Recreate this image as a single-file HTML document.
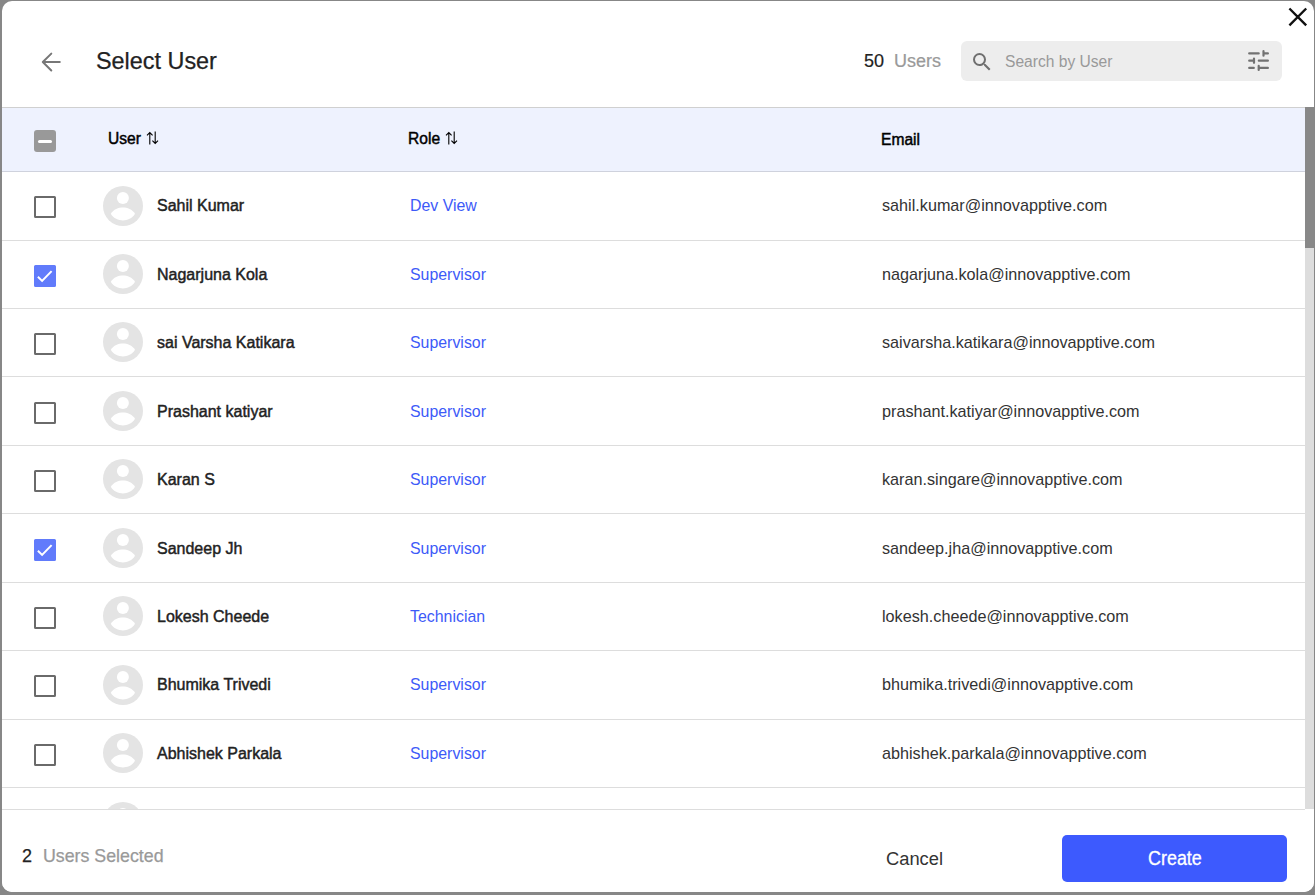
<!DOCTYPE html>
<html><head><meta charset="utf-8">
<style>
*{margin:0;padding:0;box-sizing:border-box}
html,body{width:1315px;height:895px;overflow:hidden;background:#878787;font-family:"Liberation Sans",sans-serif}
.modal{position:absolute;left:2px;top:1px;width:1312px;height:891px;background:#fff;border-radius:10px;overflow:hidden}
.abs{position:absolute}
.t{position:absolute;white-space:nowrap;line-height:1}
.hline{position:absolute;left:0;height:1px}
.row .cb{position:absolute;left:32px;width:22px;height:22px;border:2px solid #6a6a6a;border-radius:1.5px}
.cb.on{background:#617bfb;border-color:#617bfb}
.av{position:absolute;left:101px;width:40px;height:40px}
.name{position:absolute;left:155px;font-size:16px;color:#222;-webkit-text-stroke:0.45px #222;margin-top:1.3px}
.role{position:absolute;left:408px;font-size:15.9px;color:#3d5af8;margin-top:1px}
.email{position:absolute;left:880px;font-size:16.2px;color:#333;margin-top:0px}
</style></head>
<body>
<div class="modal">
  <!-- close -->
  <svg class="abs" style="left:1283px;top:3px" width="30" height="30" viewBox="1285 4 30 30"><path d="M1289.4 8.5L1306.2 25.3M1306.2 8.5L1289.4 25.3" stroke="#111" stroke-width="2.4" fill="none"/></svg>
  <!-- back arrow -->
  <svg class="abs" style="left:34px;top:44px" width="30" height="30" viewBox="36 45 30 30"><path d="M59.8 62.05H43.2M51.3 53.6L42.8 62.05L51.3 70.5" stroke="#777" stroke-width="2" stroke-linecap="round" stroke-linejoin="round" fill="none"/></svg>
  <div class="t" style="left:94px;top:49px;font-size:23.4px;color:#222;-webkit-text-stroke:0.25px #222">Select User</div>
  <div class="t" style="left:862px;top:51px;font-size:18px;color:#222;-webkit-text-stroke:0.2px #222">50</div>
  <div class="t" style="left:892px;top:51px;font-size:18px;color:#999;-webkit-text-stroke:0.2px #999">Users</div>
  <div class="abs" style="left:959px;top:40px;width:321px;height:40px;background:#ededed;border-radius:6px"></div>
  <svg class="abs" style="left:968px;top:49px" width="24" height="24" viewBox="0 0 24 24"><path fill="#6f6f6f" d="M15.5 14h-.79l-.28-.27A6.471 6.471 0 0 0 16 9.5 6.5 6.5 0 1 0 9.5 16c1.61 0 3.09-.59 4.23-1.57l.27.28v.79l5 4.99L20.49 19l-4.99-5zm-6 0C7.010 14 5 11.99 5 9.5S7.01 5 9.5 5 14 7.01 14 9.5 11.99 14 9.5 14z"/></svg>
  <div class="t" style="left:1003px;top:53px;font-size:15.6px;color:#999">Search by User</div>
  <svg class="abs" style="left:1240px;top:44px" width="32" height="32" viewBox="1242 45 32 32"><g stroke="#727272" stroke-width="2.2" stroke-linecap="round" fill="none"><path d="M1249.2 53.44H1258.7M1263.5 51.2V55.7M1263.5 53.44H1267.9M1249.2 60.69H1253M1254 58.5V62.8M1258.8 60.69H1267.9M1249.2 67.88H1253.8M1258.7 65.9V69.9M1258.7 67.88H1267.9"/></g></svg>

  <!-- table header -->
  <div class="hline" style="top:106px;width:1303px;background:#d0d0d0"></div>
  <div class="abs" style="left:0;top:107px;width:1303px;height:63px;background:#eef2fe"></div>
  <div class="hline" style="top:170px;width:1303px;background:#cfd2dd"></div>
  <div class="abs" style="left:32px;top:129px;width:22px;height:22px;background:#999;border-radius:3px"><div class="abs" style="left:4px;top:10px;width:14px;height:3px;background:#fff;border-radius:2px"></div></div>
  <div class="t" style="left:106px;top:130px;font-size:15.6px;color:#000;-webkit-text-stroke:0.45px #000">User</div><svg class="abs" style="left:144px;top:130px" width="13" height="14" viewBox="0 0 13 14"><path d="M3.8 1.5V13.5M1 4.3L3.8 1.5L6.6 4.3M9.2 0.5V12.5M6.4 9.7L9.2 12.5L12 9.7" stroke="#000" stroke-width="1.1" fill="none"/></svg>
  <div class="t" style="left:406px;top:130px;font-size:15.6px;color:#000;-webkit-text-stroke:0.45px #000">Role</div><svg class="abs" style="left:443px;top:130px" width="13" height="14" viewBox="0 0 13 14"><path d="M3.8 1.5V13.5M1 4.3L3.8 1.5L6.6 4.3M9.2 0.5V12.5M6.4 9.7L9.2 12.5L12 9.7" stroke="#000" stroke-width="1.1" fill="none"/></svg>
  <div class="t" style="left:879px;top:131px;font-size:15.6px;color:#000;-webkit-text-stroke:0.45px #000">Email</div>

  <div id="rows"><div class="row"><div class="cb" style="top:195px"></div><svg class="av" style="top:185px" width="40" height="40" viewBox="0 0 40 40"><circle cx="20" cy="20" r="20" fill="#e4e4e4"/><circle cx="19.9" cy="11.9" r="6" fill="#fff"/><path d="M7.8 27.8C10.5 23.2 15.5 21.4 19.9 21.4C24.3 21.4 29.3 23.2 32 27.8C29.3 32.6 24.3 34.4 19.9 34.4C15.5 34.4 10.5 32.6 7.8 27.8Z" fill="#fff"/></svg><div class="t name" style="top:196px">Sahil Kumar</div><div class="t role" style="top:196px">Dev View</div><div class="t email" style="top:196px">sahil.kumar@innovapptive.com</div></div><div class="hline" style="top:239px;width:1303px;background:#ddd"></div><div class="row"><div class="cb on" style="top:264px"><svg width="18" height="18" viewBox="0 0 18 18" style="position:absolute;left:0;top:0"><path d="M1.9 9.8L6.1 13.9L15.6 4.1" stroke="#fff" stroke-width="2" fill="none"/></svg></div><svg class="av" style="top:253px" width="40" height="40" viewBox="0 0 40 40"><circle cx="20" cy="20" r="20" fill="#e4e4e4"/><circle cx="19.9" cy="11.9" r="6" fill="#fff"/><path d="M7.8 27.8C10.5 23.2 15.5 21.4 19.9 21.4C24.3 21.4 29.3 23.2 32 27.8C29.3 32.6 24.3 34.4 19.9 34.4C15.5 34.4 10.5 32.6 7.8 27.8Z" fill="#fff"/></svg><div class="t name" style="top:265px">Nagarjuna Kola</div><div class="t role" style="top:265px">Supervisor</div><div class="t email" style="top:265px">nagarjuna.kola@innovapptive.com</div></div><div class="hline" style="top:307px;width:1303px;background:#ddd"></div><div class="row"><div class="cb" style="top:332px"></div><svg class="av" style="top:321px" width="40" height="40" viewBox="0 0 40 40"><circle cx="20" cy="20" r="20" fill="#e4e4e4"/><circle cx="19.9" cy="11.9" r="6" fill="#fff"/><path d="M7.8 27.8C10.5 23.2 15.5 21.4 19.9 21.4C24.3 21.4 29.3 23.2 32 27.8C29.3 32.6 24.3 34.4 19.9 34.4C15.5 34.4 10.5 32.6 7.8 27.8Z" fill="#fff"/></svg><div class="t name" style="top:333px">sai Varsha Katikara</div><div class="t role" style="top:333px">Supervisor</div><div class="t email" style="top:333px">saivarsha.katikara@innovapptive.com</div></div><div class="hline" style="top:375px;width:1303px;background:#ddd"></div><div class="row"><div class="cb" style="top:401px"></div><svg class="av" style="top:390px" width="40" height="40" viewBox="0 0 40 40"><circle cx="20" cy="20" r="20" fill="#e4e4e4"/><circle cx="19.9" cy="11.9" r="6" fill="#fff"/><path d="M7.8 27.8C10.5 23.2 15.5 21.4 19.9 21.4C24.3 21.4 29.3 23.2 32 27.8C29.3 32.6 24.3 34.4 19.9 34.4C15.5 34.4 10.5 32.6 7.8 27.8Z" fill="#fff"/></svg><div class="t name" style="top:402px">Prashant katiyar</div><div class="t role" style="top:402px">Supervisor</div><div class="t email" style="top:402px">prashant.katiyar@innovapptive.com</div></div><div class="hline" style="top:444px;width:1303px;background:#ddd"></div><div class="row"><div class="cb" style="top:469px"></div><svg class="av" style="top:458px" width="40" height="40" viewBox="0 0 40 40"><circle cx="20" cy="20" r="20" fill="#e4e4e4"/><circle cx="19.9" cy="11.9" r="6" fill="#fff"/><path d="M7.8 27.8C10.5 23.2 15.5 21.4 19.9 21.4C24.3 21.4 29.3 23.2 32 27.8C29.3 32.6 24.3 34.4 19.9 34.4C15.5 34.4 10.5 32.6 7.8 27.8Z" fill="#fff"/></svg><div class="t name" style="top:470px">Karan S</div><div class="t role" style="top:470px">Supervisor</div><div class="t email" style="top:470px">karan.singare@innovapptive.com</div></div><div class="hline" style="top:512px;width:1303px;background:#ddd"></div><div class="row"><div class="cb on" style="top:538px"><svg width="18" height="18" viewBox="0 0 18 18" style="position:absolute;left:0;top:0"><path d="M1.9 9.8L6.1 13.9L15.6 4.1" stroke="#fff" stroke-width="2" fill="none"/></svg></div><svg class="av" style="top:527px" width="40" height="40" viewBox="0 0 40 40"><circle cx="20" cy="20" r="20" fill="#e4e4e4"/><circle cx="19.9" cy="11.9" r="6" fill="#fff"/><path d="M7.8 27.8C10.5 23.2 15.5 21.4 19.9 21.4C24.3 21.4 29.3 23.2 32 27.8C29.3 32.6 24.3 34.4 19.9 34.4C15.5 34.4 10.5 32.6 7.8 27.8Z" fill="#fff"/></svg><div class="t name" style="top:539px">Sandeep Jh</div><div class="t role" style="top:539px">Supervisor</div><div class="t email" style="top:539px">sandeep.jha@innovapptive.com</div></div><div class="hline" style="top:581px;width:1303px;background:#ddd"></div><div class="row"><div class="cb" style="top:606px"></div><svg class="av" style="top:595px" width="40" height="40" viewBox="0 0 40 40"><circle cx="20" cy="20" r="20" fill="#e4e4e4"/><circle cx="19.9" cy="11.9" r="6" fill="#fff"/><path d="M7.8 27.8C10.5 23.2 15.5 21.4 19.9 21.4C24.3 21.4 29.3 23.2 32 27.8C29.3 32.6 24.3 34.4 19.9 34.4C15.5 34.4 10.5 32.6 7.8 27.8Z" fill="#fff"/></svg><div class="t name" style="top:607px">Lokesh Cheede</div><div class="t role" style="top:607px">Technician</div><div class="t email" style="top:607px">lokesh.cheede@innovapptive.com</div></div><div class="hline" style="top:649px;width:1303px;background:#ddd"></div><div class="row"><div class="cb" style="top:674px"></div><svg class="av" style="top:664px" width="40" height="40" viewBox="0 0 40 40"><circle cx="20" cy="20" r="20" fill="#e4e4e4"/><circle cx="19.9" cy="11.9" r="6" fill="#fff"/><path d="M7.8 27.8C10.5 23.2 15.5 21.4 19.9 21.4C24.3 21.4 29.3 23.2 32 27.8C29.3 32.6 24.3 34.4 19.9 34.4C15.5 34.4 10.5 32.6 7.8 27.8Z" fill="#fff"/></svg><div class="t name" style="top:675px">Bhumika Trivedi</div><div class="t role" style="top:675px">Supervisor</div><div class="t email" style="top:675px">bhumika.trivedi@innovapptive.com</div></div><div class="hline" style="top:718px;width:1303px;background:#ddd"></div><div class="row"><div class="cb" style="top:743px"></div><svg class="av" style="top:732px" width="40" height="40" viewBox="0 0 40 40"><circle cx="20" cy="20" r="20" fill="#e4e4e4"/><circle cx="19.9" cy="11.9" r="6" fill="#fff"/><path d="M7.8 27.8C10.5 23.2 15.5 21.4 19.9 21.4C24.3 21.4 29.3 23.2 32 27.8C29.3 32.6 24.3 34.4 19.9 34.4C15.5 34.4 10.5 32.6 7.8 27.8Z" fill="#fff"/></svg><div class="t name" style="top:744px">Abhishek Parkala</div><div class="t role" style="top:744px">Supervisor</div><div class="t email" style="top:744px">abhishek.parkala@innovapptive.com</div></div><div class="hline" style="top:786px;width:1303px;background:#ddd"></div><svg class="av" style="top:801px" width="40" height="40" viewBox="0 0 40 40"><circle cx="20" cy="20" r="20" fill="#e4e4e4"/><circle cx="19.9" cy="11.9" r="6" fill="#fff"/><path d="M7.8 27.8C10.5 23.2 15.5 21.4 19.9 21.4C24.3 21.4 29.3 23.2 32 27.8C29.3 32.6 24.3 34.4 19.9 34.4C15.5 34.4 10.5 32.6 7.8 27.8Z" fill="#fff"/></svg></div><!--/rows-->

  <!-- scrollbar -->
  <div class="abs" style="left:1303px;top:106px;width:9px;height:702px;background:#ddd"></div>
  <div class="abs" style="left:1303px;top:106px;width:9px;height:141px;background:#888"></div>

  <!-- footer -->
  <div class="abs" style="left:0;top:808px;width:1312px;height:83px;background:#fff"></div>
  <div class="hline" style="top:808px;width:1303px;background:#ddd"></div>
  <div class="t" style="left:20px;top:846px;font-size:18px;color:#222;-webkit-text-stroke:0.25px #222">2</div>
  <div class="t" style="left:41px;top:847px;font-size:17.8px;color:#999;-webkit-text-stroke:0.25px #999">Users Selected</div>
  <div class="t" style="left:884px;top:848px;font-size:19.2px;color:#333;transform:scaleX(0.955);transform-origin:0 0">Cancel</div>
  <div class="abs" style="left:1060px;top:834px;width:225px;height:47px;background:#3d5afe;border-radius:5px"></div>
  <div class="t" style="left:1146px;top:848px;font-size:19.6px;color:#fff;-webkit-text-stroke:0.3px #fff;transform:scaleX(0.915);transform-origin:0 0">Create</div>
</div>
</body></html>
